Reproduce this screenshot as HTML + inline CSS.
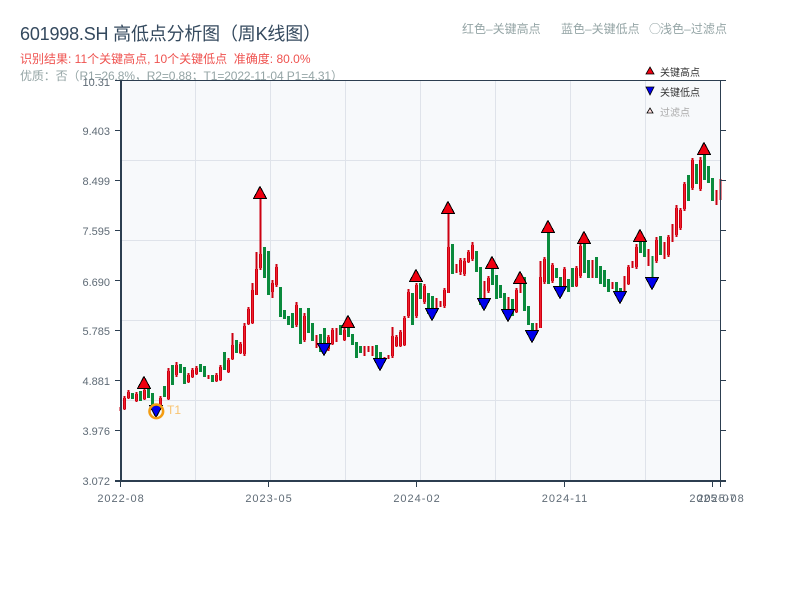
<!DOCTYPE html>
<html><head><meta charset="utf-8"><style>
html,body{margin:0;padding:0;background:#fff}
svg{display:block}
text{font-family:"Liberation Sans","Noto Sans CJK SC",sans-serif}
</style></head><body>
<svg width="800" height="600" viewBox="0 0 800 600" xmlns="http://www.w3.org/2000/svg">
<rect width="800" height="600" fill="#fff"/>
<text x="20" y="40" font-size="18" fill="#34495e" textLength="301" lengthAdjust="spacing">601998.SH 高低点分析图（周K线图）</text>
<text x="20" y="63" font-size="12" fill="#ef5350">识别结果: 11个关键高点, 10个关键低点&#160;&#160;准确度: 80.0%</text>
<text x="20" y="80" font-size="12" fill="#95a5a6" textLength="323" lengthAdjust="spacing">优质：否（R1=26.8%，R2=0.88；T1=2022-11-04 P1=4.31）</text>
<text x="462" y="33" font-size="12" fill="#95a5a6">红色–关键高点</text>
<text x="561" y="33" font-size="12" fill="#95a5a6">蓝色–关键低点</text>
<text x="649" y="33" font-size="12" fill="#95a5a6" style="font-family:'Noto Sans CJK SC',sans-serif">○</text>
<text x="660" y="33" font-size="12" fill="#95a5a6" textLength="67" lengthAdjust="spacing">浅色–过滤点</text>

<rect x="121" y="80" width="600" height="401" fill="#f7f9fb"/>
<g stroke="#dfe3ea" stroke-width="1" fill="none" shape-rendering="crispEdges">
<path d="M121 160.500H720M121 240.500H720M121 320.500H720M121 400.500H720"/>
<path d="M195.500 80V480M270.500 80V480M345.500 80V480M420.500 80V480M495.500 80V480M570.500 80V480M645.500 80V480"/>
</g>

<g transform="translate(0.5 0)" fill="none" shape-rendering="crispEdges">
<path stroke="#cc0010" stroke-width="2" d="M120 407V411M124 396V410M128 390V399M136 392V402M144 388V400M160 396V407M168 368V400M176 362V377M188 373V383M192 368V378M196 366V375M208 375V379M216 373V382M220 365V381M228 358V373M232 333V360M240 342V354M244 323V356M248 307V325M252 283V324M256 252V295M260 198V270M272 280V298M276 264V287M296 302V327M304 313V342M316 335V348M328 335V351M332 328V345M336 328V342M344 328V341M364 346V356M368 346V352M372 346V356M384 357V362M388 355V359M392 327V358M396 335V347M400 330V347M404 316V346M408 289V318M416 283V318M424 284V304M436 298V309M440 301V307M444 288V308M448 213V293M456 264V273M460 258V275M464 258V276M468 250V263M472 242V261M484 281V298M488 276V293M508 297V310M516 288V313M520 283V293M536 323V330M540 261V328M544 257V284M552 263V283M564 267V287M576 266V287M580 243V278M592 260V278M612 282V289M624 276V293M628 265V285M632 261V268M636 244V269M648 249V266M656 237V263M664 242V259M668 235V257M672 224V242M676 205V237M680 208V230M684 182V211M692 158V190M700 157V191M716 190V205M720 179V200"/>
<path id="b" d="M124 398V409M128 392V398M136 394V401M144 390V399M160 398V406M168 371V399M176 365V375M188 375V382M192 370V377M196 368V374M216 375V381M220 367V380M228 360V372M232 345V359M240 344V353M244 326V354M248 309V324M252 290V323M256 269V295M260 254V268M272 283V292M276 267V285M296 305V325M304 316V340M328 337V349M332 330V344M344 330V340M392 336V356M396 337V346M400 332V346M404 318V345M408 292V316M416 285V316M424 286V302M444 290V306M448 247V293M460 260V272M464 261V274M468 252V262M472 245V259M488 278V291M516 290V312M540 277V328M544 259V282M552 265V281M564 269V286M576 268V286M580 246V276M628 267V284M636 247V267M656 240V261M668 237V255M676 208V235M680 210V228M684 184V209M692 160V188M700 160V189"/>
<use href="#b" stroke="#cc0010" stroke-width="3"/>
<use href="#b" stroke="#f0202e" stroke-width="1"/>
<path stroke="#0a8a3c" stroke-width="3" d="M132 393V399M140 391V401M148 388V398M152 393V407M156 405V413M164 386V397M172 365V385M180 364V373M184 367V384M200 364V372M204 366V377M212 375V382M224 352V370M236 340V353M264 247V278M268 251V295M280 287V317M284 310V319M288 316V325M292 313V328M300 308V344M308 308V333M312 323V341M320 334V352M324 328V347M340 325V335M348 327V337M352 334V345M356 342V358M360 346V353M376 345V358M380 352V362M412 293V325M420 283V299M428 293V314M432 296V312M452 244V274M476 251V272M480 267V305M492 268V285M496 275V299M500 285V298M504 293V310M512 299V316M524 277V311M528 306V325M532 323V332M548 232V284M556 268V278M560 277V292M568 279V292M572 268V287M584 243V273M588 260V278M596 257V278M600 266V284M604 270V287M608 279V292M616 282V293M620 288V295M640 242V253M644 242V257M660 236V255M688 175V201M696 164V184M704 153V180M708 166V183M712 178V201"/>
<path stroke="#0a8a3c" stroke-width="2" d="M652 256V278"/>
</g>

<g fill="#2c3e50" shape-rendering="crispEdges">
<rect x="115" y="80" width="611" height="1"/>
<rect x="120" y="80" width="2" height="402"/>
<rect x="115" y="480" width="611" height="2"/>
<rect x="720" y="80" width="1" height="402"/>
<path d="M115 130h5v1h-5zM115 180h5v1h-5zM115 230h5v1h-5zM115 280h5v1h-5zM115 330h5v1h-5zM115 380h5v1h-5zM115 430h5v1h-5z"/>
<path d="M721 130h5v1h-5zM721 180h5v1h-5zM721 230h5v1h-5zM721 280h5v1h-5zM721 330h5v1h-5zM721 380h5v1h-5zM721 430h5v1h-5z"/>
<path d="M120 482h1v5h-1zM268 482h1v5h-1zM416 482h1v5h-1zM564 482h1v5h-1zM712 482h1v5h-1zM720 482h1v5h-1z"/>
</g>

<g font-size="11" fill="#5f6b76" text-anchor="end">
<text x="110" y="86">10.31</text>
<text x="110" y="135">9.403</text>
<text x="110" y="185">8.499</text>
<text x="110" y="235">7.595</text>
<text x="110" y="286">6.690</text>
<text x="110" y="335">5.785</text>
<text x="110" y="385">4.881</text>
<text x="110" y="435">3.976</text>
<text x="110" y="485">3.072</text>
</g>
<g font-size="11" fill="#5f6b76" text-anchor="middle" letter-spacing="1">
<text x="121" y="502">2022-08</text>
<text x="269" y="502">2023-05</text>
<text x="417" y="502">2024-02</text>
<text x="565" y="502">2024-11</text>
<text x="713" y="502">2025-07</text>
<text x="721" y="502">2025-08</text>
</g>

<g fill="#f00010" stroke="#000" stroke-width="1" shape-rendering="crispEdges">
<path d="M144 376.500L150.500 388.500H137.500Z"/>
<path d="M260 186.500L266.500 198.500H253.500Z"/>
<path d="M348 315.500L354.500 327.500H341.500Z"/>
<path d="M416 269.500L422.500 281.500H409.500Z"/>
<path d="M448 201.500L454.500 213.500H441.500Z"/>
<path d="M492 256.500L498.500 268.500H485.500Z"/>
<path d="M520 271.500L526.500 283.500H513.500Z"/>
<path d="M548 220.500L554.500 232.500H541.500Z"/>
<path d="M584 231.500L590.500 243.500H577.500Z"/>
<path d="M640 229.500L646.500 241.500H633.500Z"/>
<path d="M704 142.500L710.500 154.500H697.500Z"/>
</g>
<g fill="#0000ee" stroke="#000" stroke-width="1" shape-rendering="crispEdges">
<path d="M149.500 405.500H162.500L156 417.500Z"/>
<path d="M317.500 343.500H330.500L324 355.500Z"/>
<path d="M373.500 358.500H386.500L380 370.500Z"/>
<path d="M425.500 308.500H438.500L432 320.500Z"/>
<path d="M477.500 298.500H490.500L484 310.500Z"/>
<path d="M501.500 309.500H514.500L508 321.500Z"/>
<path d="M525.500 330.500H538.500L532 342.500Z"/>
<path d="M553.500 286.500H566.500L560 298.500Z"/>
<path d="M613.500 291.500H626.500L620 303.500Z"/>
<path d="M645.500 277.500H658.500L652 289.500Z"/>
</g>
<circle cx="156.300" cy="411.300" r="6.800" fill="none" stroke="#f39c12" stroke-width="2.600"/>
<text x="167" y="414" font-size="12" fill="#f8c471">T1</text>

<path d="M650 67L654 74H646Z" fill="#f00010" stroke="#000" stroke-width="0.8"/>
<path d="M646 87H654L650 95Z" fill="#0000ee" stroke="#000" stroke-width="0.8"/>
<path d="M650 108L653 113H647Z" fill="#ffdddd" stroke="#000" stroke-width="0.8"/>
<text x="660" y="76" font-size="10" fill="#333">关键高点</text>
<text x="660" y="96" font-size="10" fill="#333">关键低点</text>
<text x="660" y="116" font-size="10" fill="#aaa">过滤点</text>
</svg>
</body></html>
